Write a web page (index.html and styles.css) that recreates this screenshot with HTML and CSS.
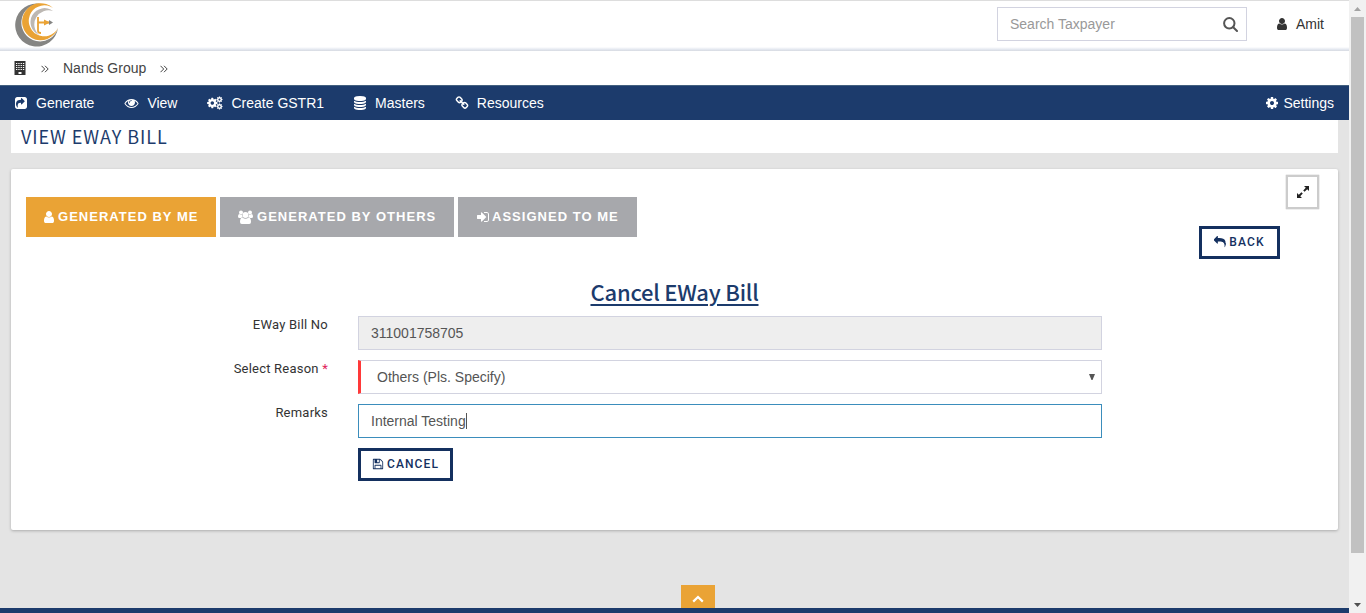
FILE: index.html
```html
<!DOCTYPE html>
<html lang="en">
<head>
<meta charset="utf-8">
<title>View EWay Bill</title>
<link rel="stylesheet" href="styles.css">
</head>
<body>
<svg width="0" height="0" class="defs">
  <symbol id="user" viewBox="0 0 1792 1792"><path d="M1536 1399q0 109-62.5 187t-150.5 78h-854q-88 0-150.5-78t-62.5-187q0-85 8.5-160.5t31.5-152 58.5-131 94-89 134.5-34.5q131 128 313 128t313-128q76 0 134.5 34.5t94 89 58.5 131 31.5 152 8.5 160.5zm-256-887q0 159-112.5 271.5t-271.5 112.5-271.5-112.5-112.5-271.5 112.5-271.5 271.5-112.5 271.5 112.5 112.5 271.5z"/></symbol>
  <symbol id="cog" viewBox="0 0 1792 1792"><path d="M1152 896q0-106-75-181t-181-75-181 75-75 181 75 181 181 75 181-75 75-181zm512-109v222q0 12-8 23t-20 13l-185 28q-19 54-39 91 35 50 107 138 10 12 10 25t-9 23q-27 37-99 108t-94 71q-12 0-26-9l-138-108q-44 23-91 38-16 136-29 186-7 28-36 28h-222q-14 0-24.5-8.5t-11.5-21.5l-28-184q-49-16-90-37l-141 107q-10 9-25 9-14 0-25-11-126-114-165-168-7-10-7-23 0-12 8-23 15-21 51-66.500t54-70.500q-27-50-41-99l-183-27q-13-2-21-12.500t-8-23.500v-222q0-12 8-23t19-13l186-28q14-46 39-92-40-57-107-138-10-12-10-24 0-10 9-23 26-36 98.500-107.500t94.500-71.500q13 0 26 10l138 107q44-23 91-38 16-136 29-186 7-28 36-28h222q14 0 24.500 8.500t11.500 21.500l28 184q49 16 90 37l142-107q9-9 24-9 13 0 25 10 129 119 165 170 7 8 7 22 0 12-8 23-15 21-51 66.500t-54 70.500q26 50 41 98l183 28q13 2 21 12.500t8 23.500z"/></symbol>
</svg>
<div class="app">
  <div class="page">
    <header class="topbar">
      <svg class="logo" viewBox="0 0 44 44">
        <path fill="#858583" d="M26 1A21.500 21.500 0 1 0 43 25A18.700 18.700 0 1 1 26 1Z"/>
        <path fill="#eaa335" d="M38 5A18.500 18.500 0 1 0 43 25A15.500 15.500 0 1 1 38 5Z"/>
        <path fill="#bdb8b3" d="M38 8A14 14 0 1 0 24 32A14.200 14.200 0 0 1 38 8Z"/>
        <path fill="none" stroke="#eaa335" stroke-width="1.800" d="M23 14V28Q23 30 26 30M23 19.500H34"/>
        <path fill="#eaa335" d="M29 16.500l6 3-6 3z"/><path fill="#858583" d="M34 17l4 2.500-4 2.500z"/>
      </svg>
      <div class="search"><span>Search Taxpayer</span>
        <svg class="icon-search" viewBox="0 0 15 15"><circle cx="6.300" cy="6.300" r="5.200"/><path d="M10.200 10.200L14 14"/></svg>
      </div>
      <svg class="icon account-icon"><use href="#user"/></svg>
      <span class="account">Amit</span>
    </header>
    <div class="crumbs">
      <svg class="building" viewBox="0 0 12 14"><path fill-rule="evenodd" d="M.5 0H11.500V14H.5ZM4.500 11V13H7.500V11ZM2 2V3H3.300V2ZM4.300 2V3H5.600V2ZM6.600 2V3H7.900V2ZM8.900 2V3H10.200V2ZM2 4V5H3.300V4ZM4.300 4V5H5.600V4ZM6.600 4V5H7.900V4ZM8.900 4V5H10.200V4ZM2 6V7H3.300V6ZM4.300 6V7H5.600V6ZM6.600 6V7H7.900V6ZM8.900 6V7H10.200V6ZM2 8V9H3.300V8ZM4.300 8V9H5.600V8ZM6.600 8V9H7.900V8ZM8.900 8V9H10.200V8Z"/></svg>
      <svg class="chev chev-first" viewBox="0 0 8 8"><path d="M.5.8L3.700 4 .5 7.200M4 .8L7.200 4 4 7.200"/></svg>
      <span>Nands Group</span>
      <svg class="chev chev-last" viewBox="0 0 8 8"><path d="M.5.8L3.700 4 .5 7.200M4 .8L7.200 4 4 7.200"/></svg>
    </div>
    <nav class="nav">
      <a class="item generate"><svg class="icon" viewBox="0 0 1792 1792"><path d="M1005 1069l352-352q19-19 19-45t-19-45l-352-352q-30-31-69-14-40 17-40 59v160q-119 0-216 19.500t-162.500 51-114 79-76.500 95.500-44.500 109-21.500 111.500-5 110.500q0 181 167 404 11 12 25 12 7 0 13-3 22-9 19-33-44-354 62-473 46-52 130-75.500t224-23.500v160q0 42 40 59 12 5 24 5 26 0 45-19zm659-653v960q0 119-84.500 203.500t-203.500 84.500h-960q-119 0-203.500-84.500t-84.500-203.500v-960q0-119 84.500-203.500t203.500-84.500h960q119 0 203.500 84.500t84.500 203.500z"/></svg>Generate</a>
      <a class="item view"><svg class="icon" viewBox="0 0 1792 1792"><path d="M1664 960q-152-236-381-353 61 104 61 225 0 185-131.500 316.500t-316.500 131.500-316.500-131.500-131.500-316.500q0-121 61-225-229 117-381 353 133 205 333.500 326.500t434.500 121.500 434.500-121.500 333.500-326.500zm-720-384q0-20-14-34t-34-14q-125 0-214.500 89.500t-89.500 214.500q0 20 14 34t34 14 34-14 14-34q0-86 61-147t147-61q20 0 34-14t14-34zm848 384q0 34-20 69-140 230-376.500 368.500t-499.500 138.500-499.500-139-376.500-368q-20-35-20-69t20-69q140-229 376.500-368t499.500-139 499.500 139 376.500 368q20 35 20 69z"/></svg>View</a>
      <a class="item gstr"><svg class="icon gears" viewBox="0 0 16 14"><use href="#cog" x="-.7" y="1" width="12" height="12"/><use href="#cog" x="9" y="0" width="7" height="7"/><use href="#cog" x="9" y="7" width="7" height="7"/></svg>Create GSTR1</a>
      <a class="item masters"><svg class="icon" viewBox="0 0 1792 1792"><path d="M896 768q237 0 443-43t325-127v170q0 69-103 128t-280 93.500-385 34.500-385-34.500-280-93.500-103-128v-170q119 84 325 127t443 43zm0 768q237 0 443-43t325-127v170q0 69-103 128t-280 93.500-385 34.500-385-34.500-280-93.500-103-128v-170q119 84 325 127t443 43zm0-384q237 0 443-43t325-127v170q0 69-103 128t-280 93.500-385 34.500-385-34.500-280-93.500-103-128v-170q119 84 325 127t443 43zm0-1152q208 0 385 34.500t280 93.500 103 128v128q0 69-103 128t-280 93.500-385 34.500-385-34.500-280-93.500-103-128v-128q0-69 103-128t280-93.500 385-34.500z"/></svg>Masters</a>
      <a class="item resources"><svg class="icon" viewBox="0 0 1792 1792"><path d="M1520 1216q0-40-28-68l-208-208q-28-28-68-28-42 0-72 32 3 3 19 18.500t21.500 21.500 15 19 13 25.500 3.500 27.500q0 40-28 68t-68 28q-15 0-27.500-3.500t-25.500-13-19-15-21.500-21.500-18.500-19q-33 31-33 73 0 40 28 68l206 207q27 27 68 27 40 0 68-26l147-146q28-28 28-67zm-703-705q0-40-28-68l-206-207q-28-28-68-28-39 0-68 27l-147 146q-28 28-28 67 0 40 28 68l208 208q27 27 68 27 42 0 72-31-3-3-19-18.500t-21.500-21.500-15-19-13-25.500-3.500-27.500q0-40 28-68t68-28q15 0 27.500 3.500t25.500 13 19 15 21.500 21.500 18.500 19q33-31 33-73zm895 705q0 120-85 203l-147 146q-83 83-203 83-121 0-204-85l-206-207q-83-83-83-203 0-123 88-209l-88-88q-86 88-208 88-120 0-204-84l-208-208q-84-84-84-204t85-203l147-146q83-83 203-83 121 0 204 85l206 207q83 83 83 203 0 123-88 209l88 88q86-88 208-88 120 0 204 84l208 208q84 84 84 204z"/></svg>Resources</a>
      <a class="item settings"><svg class="icon"><use href="#cog"/></svg>Settings</a>
    </nav>
    <h1 class="title">VIEW EWAY BILL</h1>
    <main class="panel">
      <div class="tools">
        <div class="tabs">
          <button class="tab active"><svg class="icon"><use href="#user"/></svg>GENERATED BY ME</button>
          <button class="tab others"><svg class="icon group" viewBox="0 0 15 14"><circle cx="3" cy="2.500" r="2"/><circle cx="12" cy="2.500" r="2"/><circle cx="7.500" cy="5" r="3"/><path d="M0 6.500Q0 4 1.300 4Q3 5.300 4 4.500Q4 6 4.800 7Q3.500 7 3 8H1.500Q0 8 0 6.500ZM15 6.500Q15 4 13.700 4Q12 5.300 11 4.500Q11 6 10.200 7Q11.500 7 12 8H13.500Q15 8 15 6.500ZM2 12Q2 7.500 4.500 7.500Q7.500 10 10.500 7.500Q13 7.500 13 12Q13 14 11.200 14H3.800Q2 14 2 12Z"/></svg>GENERATED BY OTHERS</button>
          <button class="tab assigned"><svg class="icon" viewBox="0 0 1792 1792"><path d="M1312 896q0 26-19 45l-544 544q-19 19-45 19t-45-19-19-45v-288h-448q-26 0-45-19t-19-45v-384q0-26 19-45t45-19h448v-288q0-26 19-45t45-19 45 19l544 544q19 19 19 45zm352-352v704q0 119-84.500 203.500t-203.500 84.500h-320q-13 0-22.500-9.500t-9.500-22.500q0-4-1-20t-.5-26.500 3-23.500 10-19.500 20.500-6.500h320q66 0 113-47t47-113v-704q0-66-47-113t-113-47h-312l-11.500-1-11.500-3-8-5.500-7-9-2-13.500q0-4-1-20t-.5-26.500 3-23.500 10-19.500 20.500-6.500h320q119 0 203.500 84.500t84.500 203.500z"/></svg>ASSIGNED TO ME</button>
        </div>
        <div class="side">
          <button class="expand"><svg viewBox="0 0 12 12"><path d="M7 0H12V5L10.200 3.200 7.600 5.800 6.200 4.400 8.800 1.800ZM5 12H0V7L1.800 8.800 4.400 6.200 5.800 7.600 3.200 10.200Z"/></svg></button>
          <button class="outline back"><svg viewBox="0 0 1792 1792"><path d="M1792 1120q0 166-127 451-3 7-10.500 24t-13.500 30-13 22q-12 17-28 17-15 0-23.500-10t-8.500-25q0-9 2.500-26.500t2.500-23.500q5-68 5-123 0-112-19.500-200.500t-54-153.500-89-112-116-79.500-145.500-49.500-167-24.500-190-7.500h-224v256q0 26-19 45t-45 19-45-19l-512-512q-19-19-19-45t19-45l512-512q19-19 45-19t45 19 19 45v256h224q713 0 875 403 53 134 53 333z"/></svg>BACK</button>
        </div>
      </div>
      <h2 class="heading">Cancel EWay Bill</h2>
      <form class="form">
        <label>EWay Bill No</label><div class="field readonly">311001758705</div>
        <label>Select Reason <span class="star">*</span></label><div class="field select"><span>Others (Pls. Specify)</span><svg class="arrow" viewBox="0 0 6 6"><path d="M0 0H6L3.500 6h-1z"/></svg></div>
        <label>Remarks</label><div class="field focus">Internal Testing<i class="caret"></i></div>
        <span></span><div><button type="button" class="outline cancel"><svg viewBox="0 0 1792 1792"><path d="M512 1536h768v-384h-768v384zm896 0h128v-896q0-14-10-38.500t-20-34.500l-281-281q-10-10-34-20t-39-10v416q0 40-28 68t-68 28h-576q-40 0-68-28t-28-68v-416h-128v1280h128v-416q0-40 28-68t68-28h832q40 0 68 28t28 68v416zm-384-928v-320q0-13-9.500-22.500t-22.500-9.500h-192q-13 0-22.500 9.500t-9.500 22.500v320q0 13 9.500 22.500t22.500 9.500h192q13 0 22.500-9.500t9.500-22.500zm640 32v928q0 40-28 68t-68 28h-1344q-40 0-68-28t-28-68v-1344q0-40 28-68t68-28h928q40 0 88 20t76 48l280 280q28 28 48 76t20 88z"/></svg>CANCEL</button></div>
      </form>
    </main>
    <footer class="footer"><div class="to-top"><svg viewBox="0 0 12 8"><path d="M1.200 6.600L6 2l4.800 4.600"/></svg></div></footer>
  </div>
  <div class="scroll">
    <svg class="up" viewBox="0 0 7 4"><path d="M3.500 0L7 4H0z"/></svg>
    <div class="thumb"></div>
    <svg class="down" viewBox="0 0 7 4"><path d="M0 0H7L3.500 4z"/></svg>
  </div>
</div>
</body>
</html>
```
FILE: styles.css
```css
* { box-sizing: border-box; }
body { margin: 0; font: 14px/20px "Liberation Sans", Arial, sans-serif; color: #333; }
.defs { position: absolute; }
button { font: inherit; margin: 0; border: 0; padding: 0; }
svg { display: block; flex: none; fill: currentColor; }
.icon { width: 14px; height: 14px; }
.app { display: flex; width: 1366px; height: 613px; overflow: hidden; background: #e4e4e4; }
.page { width: 1349px; display: flex; flex-direction: column; }

.topbar { height: 51px; flex: none; display: flex; align-items: flex-start; background: linear-gradient(#fff 46px, #dde2ec 49px, #d8dadf 50px); border-top: 1px solid #ddd; }
.logo { width: 44px; height: 44px; margin: 2px 0 0 15px; }
.search { display: flex; justify-content: space-between; align-items: center; width: 250px; height: 34px; margin: 6px 0 0 auto; padding: 0 8px 0 12px; border: 1px solid #d2d3e0; background: #fff; color: #999; }
.icon-search { width: 15px; height: 15px; fill: none; stroke: #555; stroke-width: 2; stroke-linecap: round; }
.account-icon { margin: 16px 7px 0 28px; }
.account { margin: 13px 25px 0 0; }

.crumbs { height: 34px; flex: none; display: flex; align-items: center; background: #fff; padding-left: 14px; color: #444; }
.building { width: 12px; height: 14px; color: #333; }
.chev { width: 8px; height: 8px; fill: none; stroke: #444; }
.chev-first { margin: 1px 14px 0 15px; }
.chev-last { margin: 1px 0 0 14px; }

.nav { height: 35px; flex: none; display: flex; align-items: center; padding: 0 15px 1px 14px; background: #1c3b6c; border-top: 1px solid #43607f; color: #fff; }
.item { display: flex; align-items: center; gap: 8px; margin-right: 30px; }
.view .icon { width: 15px; }
.gstr { margin-right: 29px; }
.gstr .icon { width: 16px; }
.settings { margin: 0 0 0 auto; gap: 4px; }

.title { height: 33px; flex: none; margin: 0 11px; padding: 0 10px; background: #fff; color: #1c3b6c; font: 400 18px/32px "Noto Sans CJK SC", sans-serif; letter-spacing: 0.95px; }
.panel { height: 361px; flex: none; margin: 16px 11px 0; background: #fff; border-radius: 2px; box-shadow: 0 1px 3px rgba(0,0,0,.25); }
.tools { display: flex; justify-content: space-between; height: 108px; padding: 0 19px 0 15px; }
.tabs { display: flex; gap: 4px; padding-top: 28px; }
.tab { display: flex; align-items: center; justify-content: flex-start; gap: 2px; height: 40px; width: 190px; padding-left: 16px; background: #a7a8ac; color: #fff; font-weight: 700; font-size: 13px; letter-spacing: 1.02px; white-space: nowrap; }
.tab.active { background: #eaa335; }
.others { width: 234px; gap: 4px; padding-left: 18px; }
.assigned { width: 179px; padding-left: 18px; }
.group { width: 15px; }
.side { display: flex; flex-direction: column; align-items: flex-end; padding-top: 6px; }
.expand { width: 33px; height: 34px; border: 2px solid #ccc; background: #fff; box-shadow: 0 0 1px #999; display: flex; align-items: center; justify-content: center; color: #222; }
.expand svg { width: 12px; height: 12px; }
.outline { display: flex; align-items: center; justify-content: center; gap: 3px; height: 33px; padding-bottom: 2px; border: 3px solid #14305f; background: #fff; color: #14305f; font: 500 12px/18px Roboto, sans-serif; letter-spacing: 1.1px; }
.outline svg { width: 12px; height: 12px; }
.back { width: 81px; margin: 17px 39px 0 0; }
.heading { margin: 0; text-align: center; height: 39px; color: #1c3b6c; font: 500 22px/28px "Noto Sans CJK SC", sans-serif; letter-spacing: -0.22px; text-decoration: underline; text-decoration-thickness: 2px; text-underline-offset: 3px; }
.form { display: grid; grid-template-columns: 317px 744px; column-gap: 30px; row-gap: 10px; }
.form label { padding-top: 1px; text-align: right; font: 13px/16px Roboto, sans-serif; letter-spacing: .22px; }
.star { color: #e0225a; }
.field { display: flex; align-items: center; height: 34px; border: 1px solid #d2d3e0; padding: 0 12px; color: #555; background: #fff; }
.readonly { background: #eee; }
.select { justify-content: space-between; border-left: 3px solid #ff3939; padding: 0 6px 0 16px; }
.arrow { width: 6px; height: 6px; }
.focus { border-color: #3b8dbc; }
.caret { width: 1px; height: 16px; background: #555; }
.cancel { width: 95px; }
.footer { height: 28px; margin-top: auto; display: flex; align-items: flex-start; justify-content: center; background: linear-gradient(transparent 23px, #1c3b6c 23px); }
.to-top { width: 34px; height: 23px; background: #eaa335; display: flex; justify-content: center; padding-top: 10px; margin-left: 47px; }
.to-top svg { width: 12px; height: 8px; fill: none; stroke: #fff; stroke-width: 2.200; }
.scroll { width: 17px; background: #f1f1f1; display: flex; flex-direction: column; align-items: center; padding: 7px 0 6px; color: #505050; }
.scroll svg { width: 7px; height: 4px; }
.scroll .up { color: #a3a3a3; }
.thumb { width: 13px; height: 536px; margin-top: 6px; background: #c1c1c1; }
.down { margin-top: auto; }
```
